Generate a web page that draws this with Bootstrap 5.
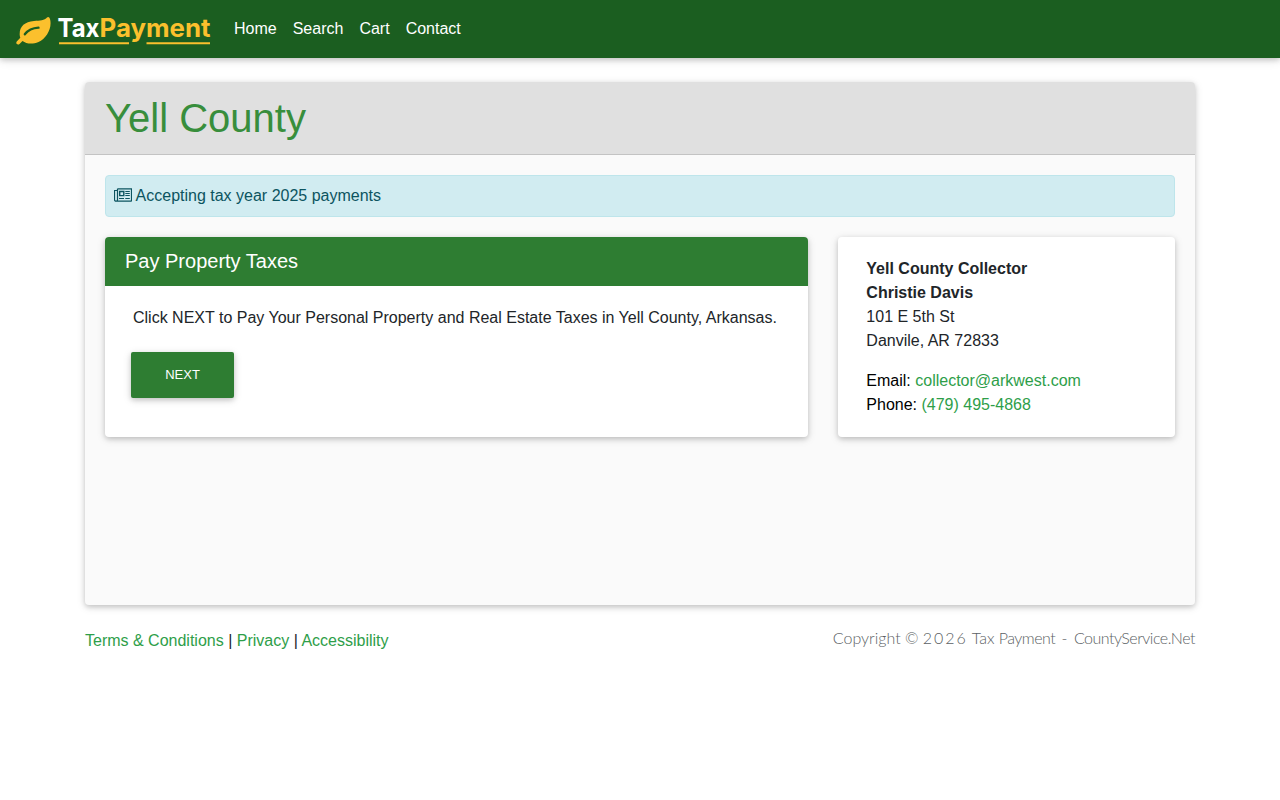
<!DOCTYPE html>
<html lang="en">
<head>
<meta charset="utf-8">
<meta name="viewport" content="width=device-width, initial-scale=1">
<title>Tax Payment - Yell County</title>
<link href="https://cdn.jsdelivr.net/npm/bootstrap@5.3.0/dist/css/bootstrap.min.css" rel="stylesheet">
<style>
  body { font-family: "Liberation Sans", Arial, sans-serif; color: #212529; }
  a { color: #2e9e49; text-decoration: none; }
  .raised { box-shadow: 0 2px 5px 0 rgba(0,0,0,.16), 0 2px 10px 0 rgba(0,0,0,.12); }
  .site-bar { background: #1b5e20; height: 58px; padding: 0 16px; }
  .site-bar .nav-link { color: #fff; padding: 8px; line-height: 24px; }
  .site-logo { margin: 0 14px 0 0; padding: 4px 0 0; line-height: 0; }
  .page-wrap { max-width: 1140px; padding: 24px 15px 0; }
  .card { border: 0; border-radius: 4px; }
  .county-card { height: 523px; background: #fafafa; }
  .county-head { background: #e0e0e0; border-bottom: 1px solid #c3c3c3; padding: 12px 20px; height: 73px; border-radius: 4px 4px 0 0; }
  .county-head h1 { font-size: 40px; line-height: 48px; color: #388e3c; font-weight: 400; }
  .county-body { padding: 20px; }
  .notice { background: #d1ecf1; border: 1px solid #bee5eb; color: #0c5460; padding: 8px; margin-bottom: 20px; line-height: 24px; border-radius: 4px; }
  .notice svg { vertical-align: -1px; }
  .panels { --bs-gutter-x: 30px; }
  .panels .card { height: 200px; }
  .pay-head { background: #2e7d32; color: #fff; font-size: 20px; line-height: 24px; padding: 12px 20px 13px; border-radius: 4px 4px 0 0; }
  .pay-body { padding: 20px 28px; }
  .btn-next { background: #2e7d32; color: #fff; font-size: 13px; line-height: 20px; border: 0; border-radius: 2px; width: 103px; height: 46px; margin: 22px 0 0 -2px; padding: 0; }
  .btn-next:hover { background: #1b5e20; color: #fff; }
  .contact-body { padding: 20px 28px; }
  .copyright { font-family: Lato, sans-serif; font-weight: 300; font-size: 16px; line-height: 18px; color: #5b5f64; }
  .copyright .wide { letter-spacing: 2px; }
  .copyright .snug { letter-spacing: -.5px; }
  .copyright .dash { padding: 0 2px; }
</style>
</head>
<body>
<nav class="navbar navbar-expand site-bar raised">
  <a class="navbar-brand site-logo" href="#" aria-label="TaxPayment">
    <svg width="196" height="44" viewBox="0 -6 196 44">
      <path fill="#fbc02d" d="M31 2.500C28.500 5.600 24 5.500 18 6 8.500 6.800 3.300 11.500 3.700 20c.1 1.200.3 2 .6 2.800L1 26.200c-2 2.300.6 4.400 2.500 2.900L6.500 26c4 3 10 3.500 16 1C30.500 23.500 36.500 12.500 34 4c-.5-2-1.900-2.700-3-1.500Z"/>
      <path d="M8.800 19.300c3.500-4.600 8-6.300 13.700-6.600" fill="none" stroke="#1b5e20" stroke-width="2.300" stroke-linecap="round"/>
      <text x="41.500" y="21.800" fill="#fff" font-family="Inter, sans-serif" font-weight="700" font-size="25.500" textLength="42" lengthAdjust="spacingAndGlyphs">Tax</text>
      <path d="M43 28.300h70M130.500 28.300H194" stroke="#fbc02d" stroke-width="2"/>
      <text x="83.500" y="21.800" fill="#fbc02d" font-family="Inter, sans-serif" font-weight="700" font-size="25.500" textLength="111" lengthAdjust="spacingAndGlyphs">Payment</text>
    </svg>
  </a>
  <ul class="navbar-nav">
    <li class="nav-item"><a class="nav-link" href="#">Home</a></li>
    <li class="nav-item"><a class="nav-link" href="#">Search</a></li>
    <li class="nav-item"><a class="nav-link" href="#">Cart</a></li>
    <li class="nav-item"><a class="nav-link" href="#">Contact</a></li>
  </ul>
</nav>
<div class="container page-wrap">
  <main class="card county-card raised">
    <div class="county-head"><h1 class="mb-0">Yell County</h1></div>
    <div class="county-body">
      <div class="notice"><svg width="18" height="14" viewBox="0 0 18 14" fill="none" stroke="currentColor"><path d="M3.500.8h14v11.400a1 1 0 0 1-1 1H2a1.500 1.500 0 0 1-1.500-1.500V2.500h3M3.500.8v11a1.400 1.400 0 0 1-1.500 1.400" stroke-width="1.200"/><path d="M5.700 3.500h4.100v4.100H5.700z" stroke-width="1.400"/><path d="M11.300 3.500h4.500M11.300 5.500h4.500M11.300 7.500h4.500M5 10.500h5M11.300 10.500h4.500"/></svg> Accepting tax year 2025 payments</div>
      <div class="row panels">
        <div class="col-8">
          <section class="card raised">
            <div class="pay-head">Pay Property Taxes</div>
            <div class="pay-body">
              <div>Click NEXT to Pay Your Personal Property and Real Estate Taxes in Yell County, Arkansas.</div>
              <button type="button" class="btn btn-next raised">NEXT</button>
            </div>
          </section>
        </div>
        <div class="col-4">
          <section class="card raised">
            <div class="contact-body">
              <p class="mb-3"><strong>Yell County Collector<br>Christie Davis</strong><br>101 E 5th St<br>Danvile, AR 72833</p>
              <p class="mb-0 text-black">Email: <a href="#">collector@arkwest.com</a><br>Phone: <a href="#">(479) 495-4868</a></p>
            </div>
          </section>
        </div>
      </div>
    </div>
  </main>
  <footer class="d-flex justify-content-between pt-4">
    <div><a href="#">Terms &amp; Conditions</a> | <a href="#">Privacy</a> | <a href="#">Accessibility</a></div>
    <div class="copyright">Copyright © <span class="wide">2026</span> Tax <span class="snug">Payment</span> <span class="dash">-</span> <span class="snug">CountyService.Net</span></div>
  </footer>
</div>
<script src="https://cdn.jsdelivr.net/npm/bootstrap@5.3.0/dist/js/bootstrap.bundle.min.js"></script>
</body>
</html>
